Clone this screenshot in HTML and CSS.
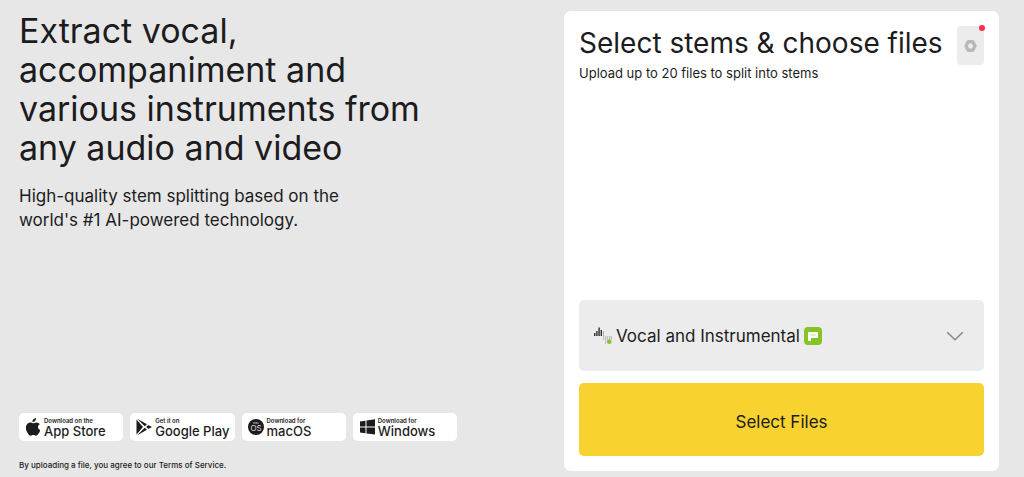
FILE: index.html
```
<!DOCTYPE html>
<html lang="en">
<head>
  <meta charset="UTF-8" />
  <title>Vocal and Instrumental Splitter</title>
  <link rel="stylesheet" href="styles.css">
</head>
<body>
  <main class="page">

    <!-- Left side: intro and app links -->
    <section class="intro">
      <h1>Extract vocal,<br>accompaniment and<br>various instruments from<br>any audio and video</h1>
      <p class="lead">High-quality stem splitting based on the<br>world's #1 AI-powered technology.</p>

      <div class="stores">
        <a href="#" class="store">
          <svg width="16" height="18" viewBox="0 0 16 18" fill="#1c1c1e">
            <path d="M11 0c.1 1.200-.3 2.200-1 3-.7.800-1.600 1.200-2.600 1.100-.1-1 .3-2 1-2.800C9.100.600 10.100.100 11 0z"/>
            <path d="M14.800 6.200c-1.200.7-1.800 1.700-1.800 2.900 0 1.500.9 2.600 2.200 3.100-.4 1.300-1 2.500-1.800 3.600-.7 1-1.400 1.900-2.500 1.900-1 0-1.400-.6-2.600-.6s-1.700.6-2.600.6c-1.100 0-1.900-1-2.600-2C1 12.800.2 9.200 1.500 6.900 2.300 5.400 3.700 4.500 5.200 4.500c1.100 0 2 .7 2.900.7.800 0 2-.8 3.300-.8 1.300 0 2.600.7 3.400 1.800z"/>
          </svg>
          <span class="store-text"><small>Download on the</small><b>App Store</b></span>
        </a>
        <a href="#" class="store">
          <svg width="16" height="18" viewBox="0 0 16 18" fill="#1c1c1e">
            <path d="M.5 1.500v15L7 9z"/>
            <path d="M1.200.700 11 6.200 8.700 8.300z"/>
            <path d="M1.200 17.300 11 11.800 8.700 9.700z"/>
            <path d="M12.300 7 16 9l-3.700 2L10.200 9z"/>
          </svg>
          <span class="store-text"><small>Get it on</small><b>Google Play</b></span>
        </a>
        <a href="#" class="store">
          <svg width="16" height="18" viewBox="0 0 16 18">
            <circle cx="8" cy="9" r="8" fill="#1c1c1e"/>
            <text x="8" y="6" class="mac-top">mac</text>
            <text x="8" y="13" class="mac-os">OS</text>
          </svg>
          <span class="store-text"><small>Download for</small><b>macOS</b></span>
        </a>
        <a href="#" class="store">
          <svg width="16" height="18" viewBox="0 0 16 18" fill="#1c1c1e">
            <path d="M1 3.500 6.500 2.700v5.800H1zM7.500 2.500 16 1.300v7.200H7.500zM1 9.500h5.500v5.700L1 14.500zM7.500 9.500H16v7.100l-8.500-1.200z"/>
          </svg>
          <span class="store-text"><small>Download for</small><b>Windows</b></span>
        </a>
      </div>

      <p class="terms">By uploading a file, you agree to our <a href="#">Terms of Service.</a></p>
    </section>

    <!-- Right side: upload card -->
    <section class="card">
      <header class="card-head">
        <div>
          <h2>Select stems &amp; choose files</h2>
          <p class="hint">Upload up to 20 files to split into stems</p>
        </div>
        <button type="button" class="settings" aria-label="Settings">
          <svg width="13" height="12" viewBox="0 0 13 12">
            <path d="M4.200 1.800h4.600L11 6l-2.200 4.200H4.200L2 6z" fill="none" stroke="#b9b9b9" stroke-width="3.400" stroke-linejoin="round"/>
          </svg>
          <span class="dot"></span>
        </button>
      </header>

      <div class="stem">
        <svg width="18" height="18" viewBox="0 0 18 18">
          <path d="M.7 9V6M2.900 9V4M5.100 9V.500M7.300 9V3" stroke="#2c2c2e" stroke-width="1.400"/>
          <path d="M9.500 9V4" stroke="#aaa"/>
          <path d="M9.700 9v4M11.700 9v8M13.700 9v7M15.700 9v4M17.400 9v4" stroke="#b5b5b5"/>
          <circle cx="15.300" cy="14.800" r="2.200" fill="#86c425"/>
        </svg>
        <select class="stem-select" aria-label="Stems">
          <option>Vocal and Instrumental</option>
        </select>
        <svg class="badge" width="18" height="18" viewBox="0 0 18 18">
          <rect width="18" height="18" rx="4" fill="#86c425"/>
          <path d="M4 5h10v6H7v3H4z" fill="#fff"/>
          <path d="M6 8h6" stroke="#86c425" stroke-width=".5"/>
        </svg>
        <svg class="chevron" width="18" height="10" viewBox="0 0 18 10" fill="none">
          <path d="M1.200 1.200 9 8.800l7.800-7.600" stroke="#858585" stroke-width="1.500"/>
        </svg>
      </div>

      <button type="button" class="select-files">Select Files</button>
    </section>

  </main>
</body>
</html>
```

FILE: styles.css
```
* { box-sizing: border-box; }
body {
  margin: 0;
  background: #e7e7e7;
  color: #1c1c1e;
  font-family: Inter, "Liberation Sans", sans-serif;
}
h1, h2, p { margin: 0; font-weight: 400; }
a { color: inherit; text-decoration: none; }
button, select { font: inherit; color: inherit; border: 0; }

.page {
  display: flex;
  justify-content: space-between;
  min-height: 100vh;
  padding: 11px 25px 6px 19px;
}

.intro { display: flex; flex-direction: column; }
h1 { font-size: 34px; line-height: 39px; }
.lead { margin-top: 17px; font-size: 17px; line-height: 24px; }

.stores {
  display: grid;
  grid-template-columns: repeat(4, 1fr);
  gap: 7px;
  width: 438px;
  margin-top: auto;
}
.store {
  display: flex;
  align-items: center;
  gap: 3px;
  height: 28px;
  padding-left: 6px;
  border-radius: 5px;
  background: #fff;
}
.store-text { display: flex; flex-direction: column; white-space: nowrap; }
.store-text small { font-size: 6px; font-weight: 600; line-height: 7px; }
.store-text b { font-size: 13px; font-weight: 500; line-height: 14px; }
.mac-top, .mac-os { fill: #ddd; text-anchor: middle; }
.mac-top { font-size: 3px; }
.mac-os { font-size: 8px; }
.terms { margin-top: 18px; font-size: 8px; font-weight: 500; line-height: 12px; }

.card {
  display: flex;
  flex-direction: column;
  width: 435px;
  padding: 15px;
  border-radius: 7px;
  background: #fff;
}
.card-head { display: flex; justify-content: space-between; }
h2 { font-size: 28px; line-height: 34px; white-space: nowrap; }
.hint { margin-top: 5px; font-size: 13px; line-height: 16px; }
.settings {
  position: relative;
  display: flex;
  align-items: center;
  justify-content: center;
  width: 27px;
  height: 39px;
  padding: 0;
  border-radius: 4px;
  background: #ececec;
}
.dot {
  position: absolute;
  top: -1px;
  right: -1px;
  width: 6px;
  height: 6px;
  border-radius: 50%;
  background: #fb2d4c;
}

.stem {
  display: flex;
  align-items: center;
  height: 71px;
  margin-top: auto;
  padding: 0 20px 0 15px;
  border-radius: 5px;
  background: #ececec;
}
.stem-select {
  appearance: none;
  margin: 0 4px;
  padding: 0;
  background: none;
  font-size: 17px;
  line-height: 24px;
}
.chevron { margin-left: auto; }
.select-files {
  height: 73px;
  margin-top: 12px;
  padding-top: 5px;
  border-radius: 5px;
  background: #f8d22f;
  font-size: 17px;
}
```
